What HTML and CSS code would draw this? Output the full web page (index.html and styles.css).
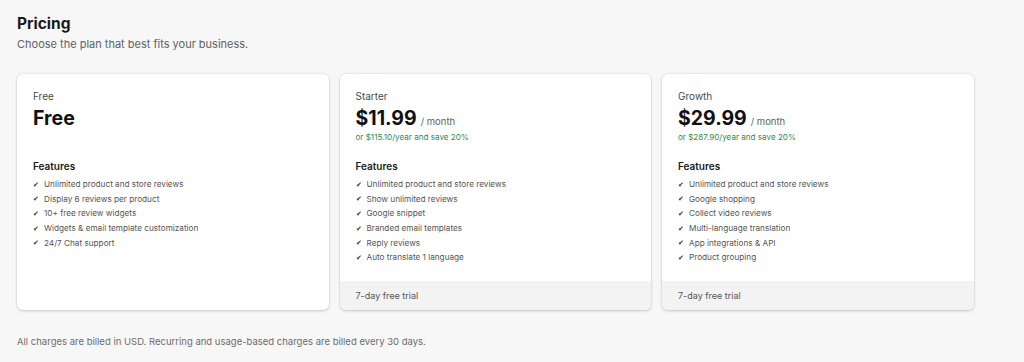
FILE: index.html
```html
<!DOCTYPE html>
<html lang="en">

<head>
  <meta charset="UTF-8">
  <meta name="viewport" content="width=device-width, initial-scale=1.0">
  <title>Pricing</title>
  <link rel="stylesheet" href="styles.css">
</head>

<body>
  <div class="page">
    <h1 class="page-title">Pricing</h1>
    <p class="page-subtitle">Choose the plan that best fits your business.</p>

    <!-- Plans -->
    <div class="plans">
      <div class="plan">
        <div class="plan-body">
          <div class="plan-name">Free</div>
          <div class="plan-price"><span class="amount">Free</span></div>
          <div class="plan-yearly"></div>
          <h3 class="features-title">Features</h3>
          <ul class="features">
            <li>Unlimited product and store reviews</li>
            <li>Display 6 reviews per product</li>
            <li>10+ free review widgets</li>
            <li>Widgets &amp; email template customization</li>
            <li>24/7 Chat support</li>
          </ul>
        </div>
      </div>

      <div class="plan">
        <div class="plan-body">
          <div class="plan-name">Starter</div>
          <div class="plan-price"><span class="amount">$11.99</span><span class="period">/ month</span></div>
          <div class="plan-yearly">or $115.10/year and save 20%</div>
          <h3 class="features-title">Features</h3>
          <ul class="features">
            <li>Unlimited product and store reviews</li>
            <li>Show unlimited reviews</li>
            <li>Google snippet</li>
            <li>Branded email templates</li>
            <li>Reply reviews</li>
            <li>Auto translate 1 language</li>
          </ul>
        </div>
        <div class="plan-footer">7-day free trial</div>
      </div>

      <div class="plan">
        <div class="plan-body">
          <div class="plan-name">Growth</div>
          <div class="plan-price"><span class="amount">$29.99</span><span class="period">/ month</span></div>
          <div class="plan-yearly">or $287.90/year and save 20%</div>
          <h3 class="features-title">Features</h3>
          <ul class="features">
            <li>Unlimited product and store reviews</li>
            <li>Google shopping</li>
            <li>Collect video reviews</li>
            <li>Multi-language translation</li>
            <li>App integrations &amp; API</li>
            <li>Product grouping</li>
          </ul>
        </div>
        <div class="plan-footer">7-day free trial</div>
      </div>
    </div>

    <p class="billing-note">All charges are billed in USD. Recurring and usage-based charges are billed every 30 days.</p>
  </div>
</body>

</html>
```

FILE: styles.css
```css
/* General */
body {
  font-family: 'Inter', 'Liberation Sans', sans-serif;
  margin: 0;
  padding: 0;
  background-color: #f7f7f7;
  color: #1a1a1a;
}

.page {
  padding: 14px 17px 0 17px;
}

.page-title {
  font-size: 15.5px;
  font-weight: 700;
  line-height: 20px;
  margin: 0;
}

.page-subtitle {
  font-size: 11px;
  color: #616161;
  line-height: 16px;
  margin: 2px 0 0 0;
}

/* Plans */
.plans {
  display: flex;
  gap: 11px;
  margin-top: 22px;
}

.plan {
  width: 311.5px;
  height: 236px;
  background-color: #fff;
  border-radius: 6px;
  box-shadow: 0 1px 3px rgba(0, 0, 0, 0.18), 0 0 0 1px rgba(0, 0, 0, 0.03);
  display: flex;
  flex-direction: column;
  overflow: hidden;
}

.plan-body {
  flex: 1;
  padding: 15px 16px 0 16px;
}

.plan-name {
  font-size: 10px;
  color: #4a4a4a;
  line-height: 14px;
  height: 14px;
}

.plan-price {
  display: flex;
  align-items: baseline;
  gap: 4px;
  height: 26px;
  line-height: 28px;
  margin-top: 1px;
}

.amount {
  font-size: 19.5px;
  font-weight: 700;
  color: #111;
}

.period {
  font-size: 9.5px;
  color: #616161;
}

.plan-yearly {
  font-size: 8.1px;
  color: #2f8a4f;
  line-height: 12px;
  height: 12px;
  margin-top: 1px;
}

.features-title {
  font-size: 10px;
  font-weight: 600;
  margin: 16px 0 4px 0;
  line-height: 14px;
}

.features {
  list-style: none;
  margin: 0;
  padding: 0;
}

.features li {
  display: flex;
  align-items: center;
  height: 14.6px;
  font-size: 8.2px;
  color: #555;
}

.features li::before {
  content: '\2714';
  font-size: 7px;
  line-height: 1;
  color: #333;
  margin-right: 5px;
}

.plan-footer {
  background-color: #f3f3f3;
  font-size: 9px;
  color: #555;
  padding: 0 16px;
  height: 29px;
  line-height: 29px;
}

.billing-note {
  font-size: 9.5px;
  color: #6d6d6d;
  margin: 26px 0 0 0;
}
```
